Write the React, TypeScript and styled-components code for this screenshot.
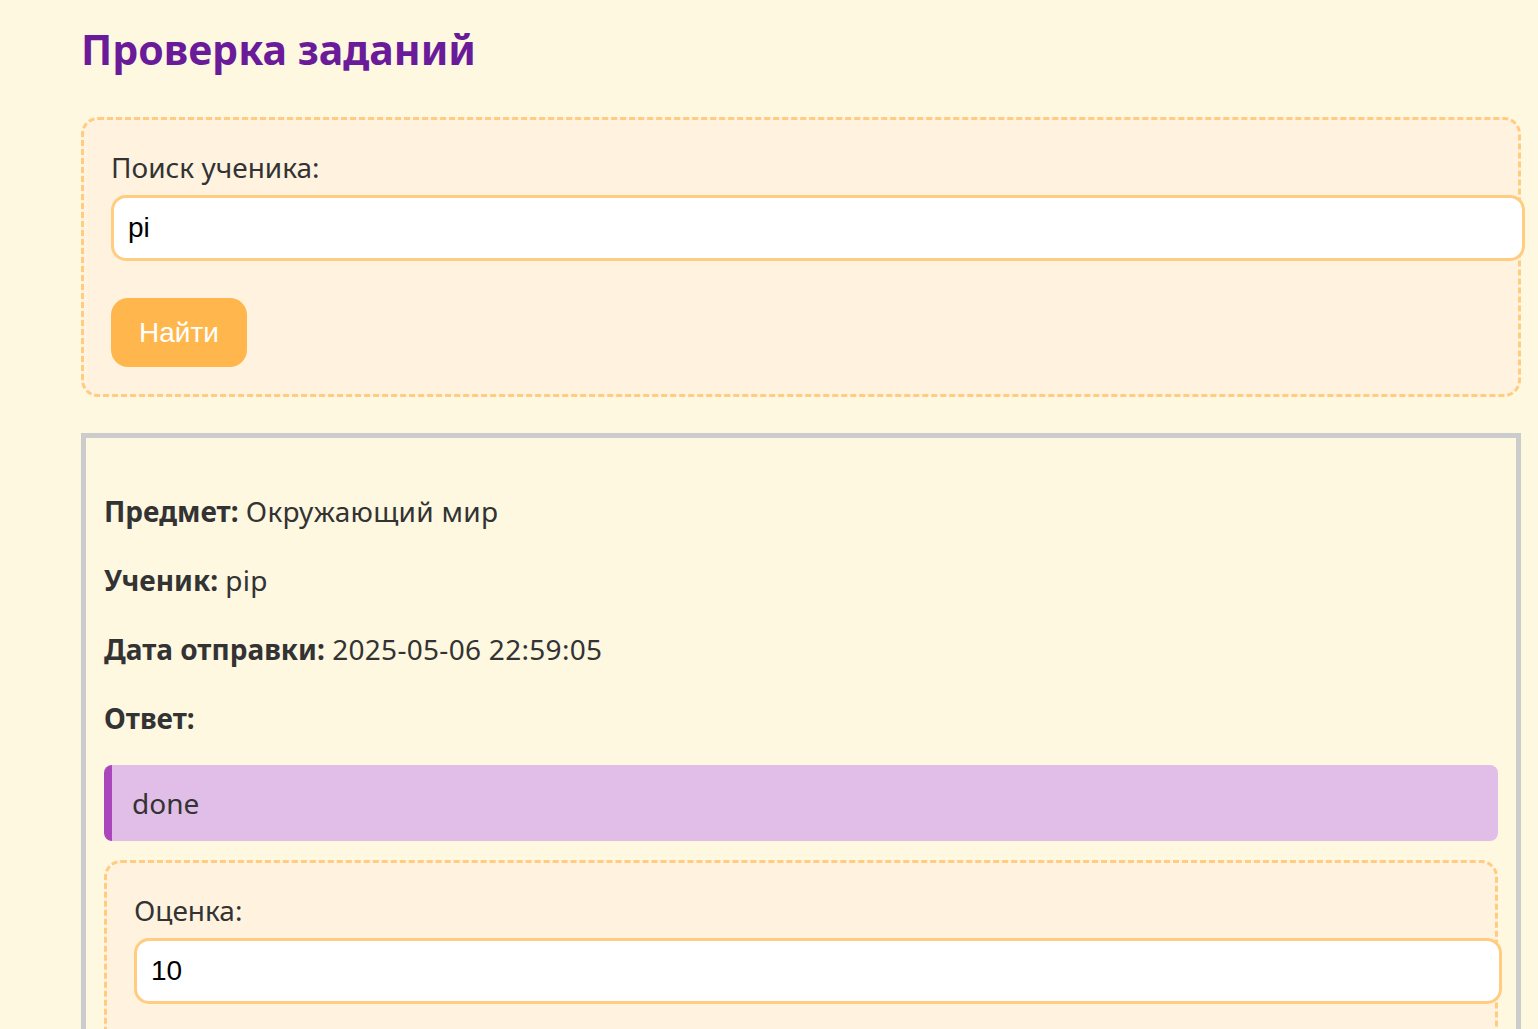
import React from "react";
import styled, { createGlobalStyle } from "styled-components";

const GlobalStyle = createGlobalStyle`
  html, body {
    margin: 0;
    padding: 0;
    background: #fff8e1;
  }
  body {
    font-family: "Comic Sans MS", "Noto Sans", sans-serif;
    color: #333333;
  }
  * { box-sizing: content-box; }
`;

const Page = styled.div`
  width: 1440px;
  padding: 21px 17px 60px 81px;
`;

const Title = styled.h1`
  margin: 0 0 40px 0;
  font-size: 41px;
  line-height: 56px;
  font-weight: 700;
  color: #6a1b9a;
`;

const FormBox = styled.div<{ $mb?: number }>`
  border: 3px dashed #ffcc80;
  border-radius: 17px;
  background: #fff3e0;
  padding: 27px;
  margin-bottom: ${(p) => p.$mb ?? 0}px;
`;

const Label = styled.label`
  display: block;
  font-size: 28px;
  line-height: 40px;
  margin-bottom: 8px;
  color: #333333;
`;

const TextInput = styled.input<{ $mb?: number }>`
  display: block;
  width: 100%;
  height: 32px;
  padding: 14px;
  margin: 0 0 ${(p) => p.$mb ?? 37}px 0;
  border: 3px solid #ffcc80;
  border-radius: 15px;
  background: #ffffff;
  font-family: "Liberation Sans", Arial, sans-serif;
  font-size: 28px;
  line-height: 32px;
  color: #000000;
  outline: none;
`;

const Button = styled.button`
  display: block;
  padding: 18.5px 28px;
  border: none;
  border-radius: 17px;
  background: #ffb74d;
  color: #ffffff;
  font-family: "Liberation Sans", Arial, sans-serif;
  font-size: 28px;
  line-height: 32px;
  cursor: pointer;
`;

const Card = styled.div`
  border: 5px solid #cccccc;
  padding: 27px 18px 40px 18px;
`;

const Info = styled.p`
  margin: 24px 0;
  font-size: 28px;
  line-height: 45px;
  color: #333333;
`;

const Key = styled.strong`
  font-weight: 700;
`;

const Value = styled.span`
  letter-spacing: 0.3px;
`;

const Answer = styled.div`
  margin: 0 0 19px 0;
  padding: 18px 20px;
  border-left: 8px solid #ab47bc;
  border-radius: 8px;
  background: #e1bee7;
  font-size: 28px;
  line-height: 40px;
  color: #333333;
`;

export default function App() {
  return (
    <>
      <GlobalStyle />
      <Page>
        <Title>Проверка заданий</Title>
        <FormBox $mb={36}>
          <Label htmlFor="student">Поиск ученика:</Label>
          <TextInput id="student" type="text" defaultValue="pi" />
          <Button type="button">Найти</Button>
        </FormBox>
        <Card>
          <Info>
            <Key>Предмет:</Key> <Value>Окружающий мир</Value>
          </Info>
          <Info>
            <Key>Ученик:</Key> <Value>pip</Value>
          </Info>
          <Info>
            <Key>Дата отправки:</Key> <Value>2025-05-06 22:59:05</Value>
          </Info>
          <Info>
            <Key>Ответ:</Key>
          </Info>
          <Answer>done</Answer>
          <FormBox>
            <Label htmlFor="grade">Оценка:</Label>
            <TextInput id="grade" type="text" defaultValue="10" $mb={60} />
          </FormBox>
        </Card>
      </Page>
    </>
  );
}
